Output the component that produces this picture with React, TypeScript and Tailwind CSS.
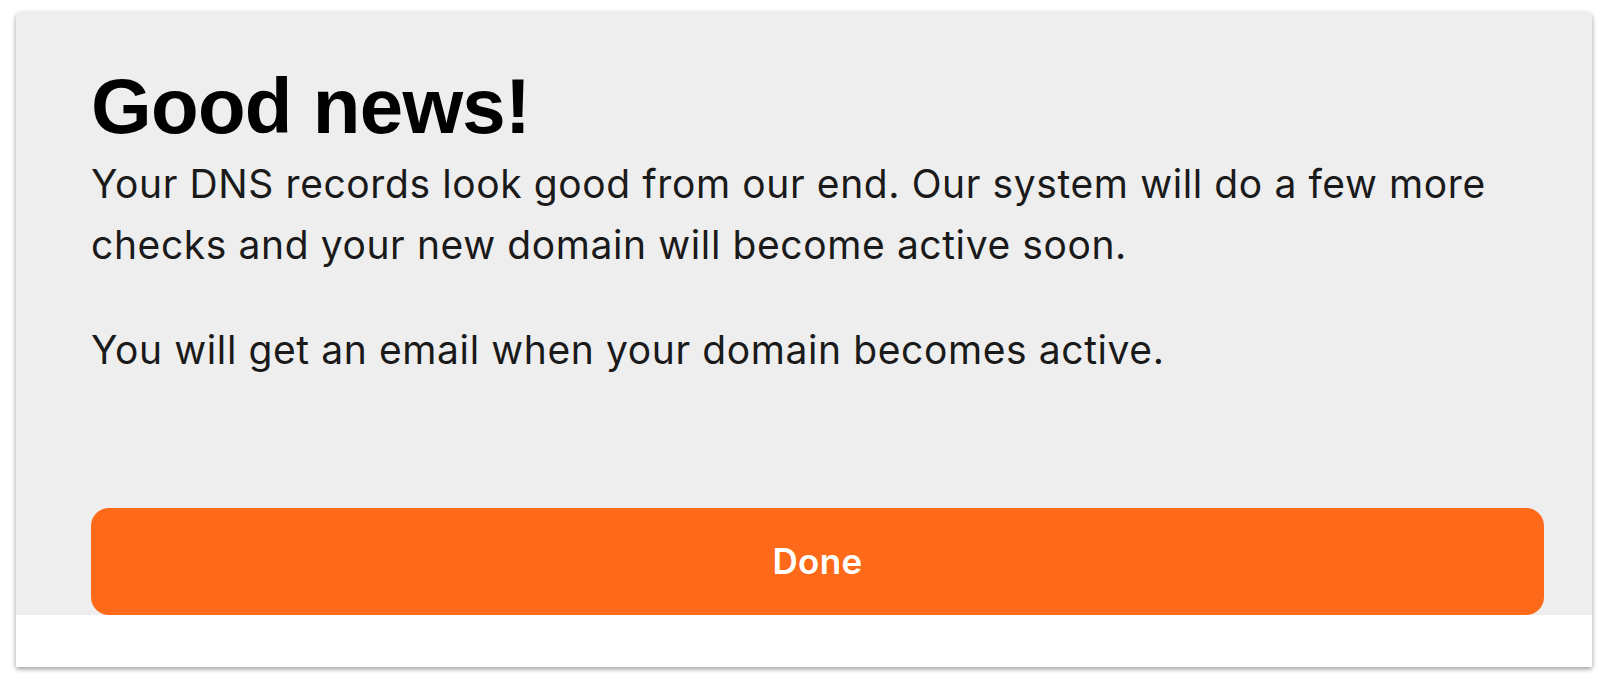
export default function App() {
  return (
    <div className="h-[678px] w-full bg-white pt-3 pr-3 pl-4">
      {/* Dialog card */}
      <div className="flex h-[655px] flex-col overflow-hidden rounded-t-[5px] bg-white shadow-[0_2px_5px_rgba(0,0,0,0.4)]">
        <div className="flex h-[603px] flex-col bg-[#eeeeee] pr-12 pl-[75px]">
          <h1
            className="mt-[55px] text-[78px] leading-[78px] font-bold tracking-[-0.7px] text-black"
            style={{ fontFamily: '"Liberation Sans", Arial, sans-serif' }}
          >
            Good news!
          </h1>
          <div
            className="text-[39px] leading-[61px] tracking-[0.6px] text-[#1a1a1a]"
            style={{ fontFamily: 'Inter, "Noto Sans", sans-serif' }}
          >
            <p className="mt-2">
              Your DNS records look good from our end. Our system will do a few more
              <br />
              checks and your new domain will become active soon.
            </p>
            <p className="mt-[44px]">You will get an email when your domain becomes active.</p>
          </div>

          <button
            className="mt-auto flex h-[107px] w-full items-center justify-center rounded-[18px] bg-[#ff6a1a] text-[35px] font-semibold tracking-[0.3px] text-white"
            style={{ fontFamily: 'Inter, "Noto Sans", sans-serif' }}
          >
            Done
          </button>
        </div>
        <div className="flex-1 bg-white" />
      </div>
    </div>
  )
}
